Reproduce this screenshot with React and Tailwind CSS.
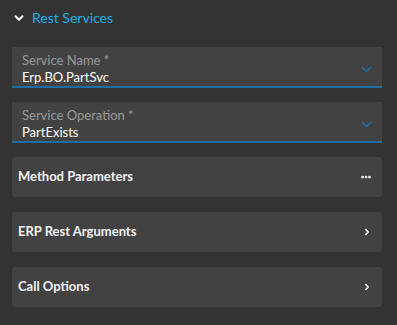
import { ChevronDown, ChevronRight, MoreHorizontal } from 'lucide-react'

function Field({ label, value }) {
  return (
    <div className="relative h-[41px] bg-[#424242] border-b-2 border-[#1b6fa6] pl-[10px] pt-[5px]">
      <div className="text-[13px] leading-[17px] text-[#9a9a9a]">{label}</div>
      <div className="text-[13px] leading-[17px] text-white">{value}</div>
      <svg className="absolute right-[10px] top-[19px]" width="11" height="7" viewBox="0 0 11 7" fill="none">
        <path d="M1 1l4.5 4.5L10 1" stroke="#1b6fa6" strokeWidth="1.6" />
      </svg>
    </div>
  )
}

function Card({ title, icon }) {
  return (
    <div className="h-[40px] rounded-[3px] bg-[#424242] flex items-center justify-between pl-[6px] pr-[10px]">
      <span className="text-[13px] font-bold text-[#f2f2f2]">{title}</span>
      {icon}
    </div>
  )
}

export default function App() {
  return (
    <div className="w-[397px] h-[325px] bg-[#333333] px-[12px] pr-[15px]" style={{ fontFamily: "'Lato', 'Open Sans', sans-serif" }}>
      <div className="h-[34px] flex items-center gap-[6px] pt-[1px]">
        <ChevronDown size={14} strokeWidth={3.5} color="#ffffff" />
        <span className="text-[14px] text-[#1fb0e8]">Rest Services</span>
      </div>
      <div className="flex flex-col gap-[14px] mt-[13px]">
        <Field label="Service Name *" value="Erp.BO.PartSvc" />
        <Field label="Service Operation *" value="PartExists" />
      </div>
      <div className="flex flex-col gap-[15px] mt-[14px]">
        <Card title="Method Parameters" icon={<MoreHorizontal size={12} strokeWidth={3.5} color="#ffffff" />} />
        <Card title="ERP Rest Arguments" icon={<ChevronRight size={10} strokeWidth={3.5} color="#ffffff" />} />
        <Card title="Call Options" icon={<ChevronRight size={10} strokeWidth={3.5} color="#ffffff" />} />
      </div>
    </div>
  )
}
